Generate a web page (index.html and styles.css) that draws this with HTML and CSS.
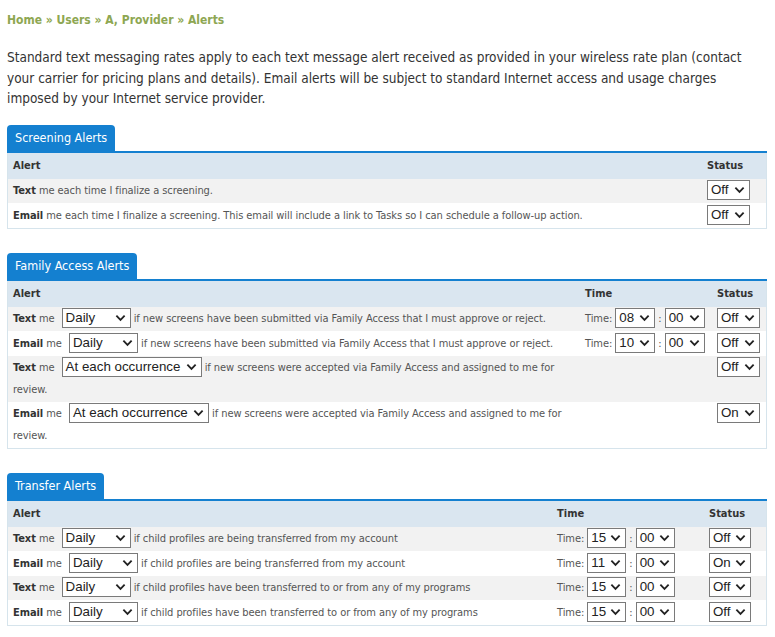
FILE: index.html
```html
<!DOCTYPE html>
<html>
<head>
<meta charset="utf-8">
<title>Alerts</title>
<link rel="stylesheet" href="styles.css">
</head>
<body>
<div class="page">
  <div class="crumbs"><a href="#">Home</a> » <a href="#">Users</a> » <a href="#">A, Provider</a> » <span>Alerts</span></div>
  <p class="intro">Standard text messaging rates apply to each text message alert received as provided in your wireless rate plan (contact your carrier for pricing plans and details). Email alerts will be subject to standard Internet access and usage charges imposed by your Internet service provider.</p>

  <section class="panel">
    <div class="tabs"><div class="tab">Screening Alerts</div></div>
    <table class="grid grid-screen">
      <thead><tr><th class="c-alert">Alert</th><th class="c-status">Status</th></tr></thead>
      <tbody>
        <tr class="odd"><td><b>Text</b> me each time I finalize a screening.</td><td><span class="sel sel-status">Off<svg viewBox="0 0 12 8"><path d="M1.5 1.5 L6 6 L10.5 1.5"/></svg></span></td></tr>
        <tr><td><b>Email</b> me each time I finalize a screening. This email will include a link to Tasks so I can schedule a follow-up action.</td><td><span class="sel sel-status">Off<svg viewBox="0 0 12 8"><path d="M1.5 1.5 L6 6 L10.5 1.5"/></svg></span></td></tr>
      </tbody>
    </table>
  </section>

  <section class="panel">
    <div class="tabs"><div class="tab">Family Access Alerts</div></div>
    <table class="grid grid-family">
      <thead><tr><th class="c-alert">Alert</th><th class="c-time">Time</th><th class="c-status">Status</th></tr></thead>
      <tbody>
        <tr class="odd"><td><b>Text</b> me <span class="sel sel-lead sel-freq">Daily<svg viewBox="0 0 12 8"><path d="M1.5 1.5 L6 6 L10.5 1.5"/></svg></span> if new screens have been submitted via Family Access that I must approve or reject.</td>
          <td class="time">Time: <span class="sel sel-time">08<svg viewBox="0 0 12 8"><path d="M1.5 1.5 L6 6 L10.5 1.5"/></svg></span> : <span class="sel sel-time">00<svg viewBox="0 0 12 8"><path d="M1.5 1.5 L6 6 L10.5 1.5"/></svg></span></td>
          <td><span class="sel sel-status">Off<svg viewBox="0 0 12 8"><path d="M1.5 1.5 L6 6 L10.5 1.5"/></svg></span></td></tr>
        <tr><td><b>Email</b> me <span class="sel sel-lead sel-freq">Daily<svg viewBox="0 0 12 8"><path d="M1.5 1.5 L6 6 L10.5 1.5"/></svg></span> if new screens have been submitted via Family Access that I must approve or reject.</td>
          <td class="time">Time: <span class="sel sel-time">10<svg viewBox="0 0 12 8"><path d="M1.5 1.5 L6 6 L10.5 1.5"/></svg></span> : <span class="sel sel-time">00<svg viewBox="0 0 12 8"><path d="M1.5 1.5 L6 6 L10.5 1.5"/></svg></span></td>
          <td><span class="sel sel-status">Off<svg viewBox="0 0 12 8"><path d="M1.5 1.5 L6 6 L10.5 1.5"/></svg></span></td></tr>
        <tr class="odd"><td><b>Text</b> me <span class="sel sel-lead sel-occ">At each occurrence<svg viewBox="0 0 12 8"><path d="M1.5 1.5 L6 6 L10.5 1.5"/></svg></span> if new screens were accepted via Family Access and assigned to me for review.</td>
          <td></td>
          <td><span class="sel sel-status">Off<svg viewBox="0 0 12 8"><path d="M1.5 1.5 L6 6 L10.5 1.5"/></svg></span></td></tr>
        <tr><td><b>Email</b> me <span class="sel sel-lead sel-occ">At each occurrence<svg viewBox="0 0 12 8"><path d="M1.5 1.5 L6 6 L10.5 1.5"/></svg></span> if new screens were accepted via Family Access and assigned to me for review.</td>
          <td></td>
          <td><span class="sel sel-status">On<svg viewBox="0 0 12 8"><path d="M1.5 1.5 L6 6 L10.5 1.5"/></svg></span></td></tr>
      </tbody>
    </table>
  </section>

  <section class="panel">
    <div class="tabs"><div class="tab">Transfer Alerts</div></div>
    <table class="grid grid-transfer">
      <thead><tr><th class="c-alert">Alert</th><th class="c-time">Time</th><th class="c-status">Status</th></tr></thead>
      <tbody>
        <tr class="odd"><td><b>Text</b> me <span class="sel sel-lead sel-freq">Daily<svg viewBox="0 0 12 8"><path d="M1.5 1.5 L6 6 L10.5 1.5"/></svg></span> if child profiles are being transferred from my account</td>
          <td class="time">Time: <span class="sel sel-time2">15<svg viewBox="0 0 12 8"><path d="M1.5 1.5 L6 6 L10.5 1.5"/></svg></span> : <span class="sel sel-time2">00<svg viewBox="0 0 12 8"><path d="M1.5 1.5 L6 6 L10.5 1.5"/></svg></span></td>
          <td><span class="sel sel-status2">Off<svg viewBox="0 0 12 8"><path d="M1.5 1.5 L6 6 L10.5 1.5"/></svg></span></td></tr>
        <tr><td><b>Email</b> me <span class="sel sel-lead sel-freq">Daily<svg viewBox="0 0 12 8"><path d="M1.5 1.5 L6 6 L10.5 1.5"/></svg></span> if child profiles are being transferred from my account</td>
          <td class="time">Time: <span class="sel sel-time2">11<svg viewBox="0 0 12 8"><path d="M1.5 1.5 L6 6 L10.5 1.5"/></svg></span> : <span class="sel sel-time2">00<svg viewBox="0 0 12 8"><path d="M1.5 1.5 L6 6 L10.5 1.5"/></svg></span></td>
          <td><span class="sel sel-status2">On<svg viewBox="0 0 12 8"><path d="M1.5 1.5 L6 6 L10.5 1.5"/></svg></span></td></tr>
        <tr class="odd"><td><b>Text</b> me <span class="sel sel-lead sel-freq">Daily<svg viewBox="0 0 12 8"><path d="M1.5 1.5 L6 6 L10.5 1.5"/></svg></span> if child profiles have been transferred to or from any of my programs</td>
          <td class="time">Time: <span class="sel sel-time2">15<svg viewBox="0 0 12 8"><path d="M1.5 1.5 L6 6 L10.5 1.5"/></svg></span> : <span class="sel sel-time2">00<svg viewBox="0 0 12 8"><path d="M1.5 1.5 L6 6 L10.5 1.5"/></svg></span></td>
          <td><span class="sel sel-status2">Off<svg viewBox="0 0 12 8"><path d="M1.5 1.5 L6 6 L10.5 1.5"/></svg></span></td></tr>
        <tr><td><b>Email</b> me <span class="sel sel-lead sel-freq">Daily<svg viewBox="0 0 12 8"><path d="M1.5 1.5 L6 6 L10.5 1.5"/></svg></span> if child profiles have been transferred to or from any of my programs</td>
          <td class="time">Time: <span class="sel sel-time2">15<svg viewBox="0 0 12 8"><path d="M1.5 1.5 L6 6 L10.5 1.5"/></svg></span> : <span class="sel sel-time2">00<svg viewBox="0 0 12 8"><path d="M1.5 1.5 L6 6 L10.5 1.5"/></svg></span></td>
          <td><span class="sel sel-status2">Off<svg viewBox="0 0 12 8"><path d="M1.5 1.5 L6 6 L10.5 1.5"/></svg></span></td></tr>
      </tbody>
    </table>
  </section>
</div>
</body>
</html>
```

FILE: styles.css
```css
html, body {
  margin: 0;
  padding: 0;
  background: #ffffff;
}

.page {
  padding: 9px 8px 0 7px;
  font-family: "DejaVu Sans Condensed", "DejaVu Sans", sans-serif;
  font-stretch: condensed;
  color: #333333;
}

.crumbs {
  font-size: 12px;
  font-weight: bold;
  line-height: 22px;
  color: #8ea752;
}

.crumbs a {
  color: #8ea752;
  text-decoration: none;
}

.intro {
  margin: 16px 0 0 0;
  font-size: 13.5px;
  line-height: 20.5px;
  color: #333333;
}

.panel {
  margin-top: 16px;
}

.panel + .panel {
  margin-top: 24px;
}

.tabs {
  display: flex;
  border-bottom: 2px solid #1480d0;
}

.tab {
  background: #1480d0;
  color: #ffffff;
  font-size: 12.5px;
  line-height: 26px;
  padding: 0 8px;
  border-radius: 4px 4px 0 0;
}

.grid {
  width: 100%;
  border-collapse: collapse;
  border: 1px solid #d6e4ec;
  border-top: 0;
  font-size: 11px;
  letter-spacing: -0.07px;
  color: #555555;
}

.grid th {
  background: #dae6f0;
  color: #333333;
  font-weight: bold;
  text-align: left;
  height: 26px;
  padding: 0 5px;
  letter-spacing: 0;
}

.grid td {
  padding: 1.5px 5px;
  line-height: 21.5px;
  vertical-align: top;
}

.grid td b {
  color: #333333;
}

.grid tr.odd td {
  background: #f2f2f2;
}

.grid-screen .c-status { width: 54px; }
.grid-family .c-time { width: 122px; }
.grid-family .c-status { width: 44px; }
.grid-transfer .c-time { width: 142px; }
.grid-transfer .c-status { width: 52px; }

.time {
  white-space: nowrap;
}

.sel {
  display: inline-flex;
  align-items: center;
  justify-content: space-between;
  box-sizing: border-box;
  height: 20px;
  padding: 0 4px 0 3px;
  border: 1px solid #7a7a7a;
  background: #ffffff;
  font-family: "Liberation Sans", Arial, sans-serif;
  font-stretch: normal;
  font-size: 13.33px;
  letter-spacing: 0;
  color: #222222;
  vertical-align: middle;
  line-height: 18px;
  margin: -1px 0 1px 0;
}

.sel-lead {
  margin-left: 4px;
}

.sel svg {
  width: 11px;
  height: 8px;
  fill: none;
  stroke: #222222;
  stroke-width: 2;
}

.sel-freq { width: 69px; }
.sel-occ { width: 140px; }
.sel-time { width: 40px; }
.sel-time2 { width: 39px; }
.sel-status { width: 43px; }
.sel-status2 { width: 42px; }
```
